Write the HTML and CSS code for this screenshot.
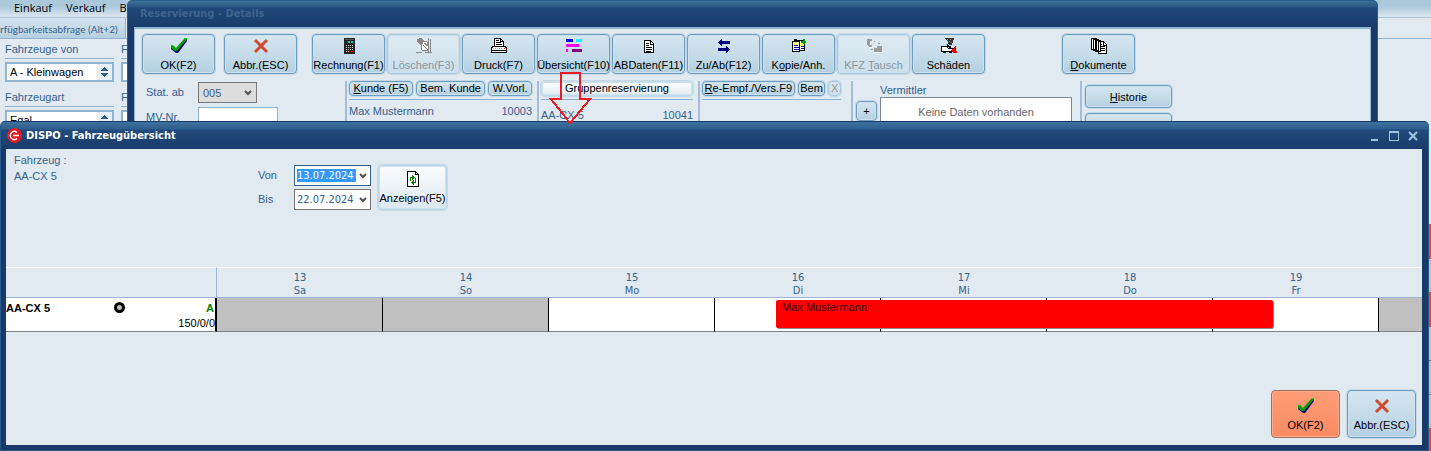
FILE: index.html
```html
<!DOCTYPE html>
<html lang="de">
<head>
  <meta charset="UTF-8">
  <meta name="viewport" content="width=device-width, initial-scale=1.0">
  <title>DISPO - Fahrzeugübersicht</title>
  <link rel="stylesheet" href="styles.css">
</head>
<body>
  <div class="desktop">

    <!-- main window in the background -->
    <div class="main-window">
      <nav class="menu-bar">
        <a href="#">Einkauf</a>
        <a href="#">Verkauf</a>
        <a href="#">B</a>
      </nav>
      <div class="tab-bar"><span class="tab">rfügbarkeitsabfrage (Alt+2)</span></div>
      <div class="filters">
        <div class="filter">
          <label for="vehicleFrom">Fahrzeuge von</label>
          <div class="spin-box">
            <select id="vehicleFrom"><option>A - Kleinwagen</option></select>
            <svg viewBox="0 0 7 10"><path d="M0 4L3.500 0L7 4zM0 6L3.500 10L7 6z"/></svg>
          </div>
        </div>
        <div class="filter">
          <label for="vehicleTo">F</label>
          <div class="spin-box"><select id="vehicleTo"><option></option></select></div>
        </div>
        <div class="filter">
          <label for="vehicleType">Fahrzeugart</label>
          <div class="spin-box">
            <select id="vehicleType"><option>Egal</option></select>
            <svg viewBox="0 0 7 10"><path d="M0 4L3.500 0L7 4zM0 6L3.500 10L7 6z"/></svg>
          </div>
        </div>
        <div class="filter">
          <label for="vehicleGroup">F</label>
          <div class="spin-box"><select id="vehicleGroup"><option></option></select></div>
        </div>
      </div>
      <div class="edge-strip"></div>
    </div>

    <!-- reservation details -->
    <section class="window details">
      <header class="title-bar">Reservierung - Details</header>
      <div class="details-body">
        <div class="toolbar">
          <button class="tool">
            <svg class="mark" viewBox="0 0 18 16"><path fill="#000080" d="M1 9l2-1 3 3L14 2l3-1v2L8 15H6L1 11z"/><path fill="#00a000" d="M1 8l2-1 3 3L14 1h3L7 13H5L1 10z"/><path fill="#00e000" d="M1 7h2v1H1zM14 0h3v1h-3z"/></svg>
            OK(F2)
          </button>
          <button class="tool cancel">
            <svg class="mark" viewBox="0 0 18 16"><path fill="none" stroke="#d0492f" stroke-width="3" d="M3 2l12 12M15 2L3 14"/></svg>
            Abbr.(ESC)
          </button>
          <button class="tool group">
            <svg viewBox="0 0 16 16"><rect x="3" width="11" height="16" rx="1" fill="#222"/><path fill="#555" d="M4 1h9v1H4z"/><path fill="#00c8c8" d="M7 3h2v2H7zM10 3h2v2h-2z"/><path fill="#ccc" d="M5 7h1v1H5zM7 7h1v1H7zM9 7h1v1H9zM11 7h1v1h-1zM5 9h1v1H5zM7 9h1v1H7zM9 9h1v1H9zM11 9h1v1h-1zM5 11h1v1H5zM7 11h1v1H7zM9 11h1v1H9zM11 11h1v1h-1zM5 13h1v1H5zM7 13h1v1H7z"/><path fill="red" d="M9 13h3v1H9z"/></svg>
            Rechnung(F1)
          </button>
          <button class="tool" disabled>
            <svg viewBox="0 0 16 16"><path fill="#888" d="M1 1l4-1 3 2-1 3-3 2-3-3z"/><path fill="#fff" stroke="#888" d="M5 7l3-4 3 1 2 5-2 4-5-1z"/><path fill="none" stroke="#888" d="M12.500 0v14M14.500 1v14M0 14.500h6M9 14.500h7M7 7l4 4M8 5l4 3"/></svg>
            Löschen(F3)
          </button>
          <button class="tool">
            <svg viewBox="0 0 16 16"><path fill="#fff" stroke="#000" d="M3.500 8.500v-8h6l3 3v5z"/><path fill="none" stroke="#000" d="M5 2.500h3M5 4.500h5M5 6.500h6M9.500 1v2.500h3"/><path fill="#fff" stroke="#000" d="M.5 9.500l2-1h11l2 1v5H.5z"/><path stroke="#999" stroke-dasharray="1 1" d="M2 10.500h10"/><path stroke="#000" d="M1 12.500h14"/><path fill="red" d="M13 10h1v1h-1z"/></svg>
            Druck(F7)
          </button>
          <button class="tool">
            <svg viewBox="0 0 16 16"><path fill="#0000ff" d="M0 1h7v3H0z"/><path fill="#00ffff" d="M10 1h6v3h-6z"/><path fill="#ff00ff" d="M0 6h13v3H0zM0 11h2v3H0z"/><path fill="#800080" d="M6 11h10v3H6z"/></svg>
            Übersicht(F10)
          </button>
          <button class="tool">
            <svg viewBox="0 0 16 16"><path fill="#fff" stroke="#000" d="M3.500 2.500h6l3 3v9h-9z"/><path fill="none" stroke="#000" d="M9.500 2v4h3M5 5.500h3M5 7.500h3M5 9.500h6M5 11.500h6M5 13.500h5"/></svg>
            ABDaten(F11)
          </button>
          <button class="tool">
            <svg viewBox="0 0 16 16"><path fill="#000080" d="M2 4.500L6 1v2h8v3H6v2zM14 11.500L10 8v2H2v3h8v2z"/></svg>
            Zu/Ab(F12)
          </button>
          <button class="tool">
            <svg viewBox="0 0 16 16"><path fill="#fff" stroke="#000" d="M1.500 3.500h7v10h-7zM8.500 2.500h5v10h-5z"/><path fill="#ffff60" d="M2 4h5v3H2zM9 5h4v3H9z"/><path stroke="#000" d="M3 2.500h7M3 1.500h3"/><path stroke="#0000a0" d="M3 7.500h4M3 9.500h5M3 11.500h5M10 8.500h3M10 10.500h3"/><path stroke="#00a000" stroke-width="2" d="M10 4h5M13 1v5"/></svg>
            <span>K<u>o</u>pie/Anh.</span>
          </button>
          <button class="tool" disabled>
            <svg viewBox="0 0 16 16"><path fill="#9a9a9a" d="M1 1h5v2H4v4h2v2H3L1 7zM8 10h3V8h5v6h-8z"/><path fill="#fff" d="M3 9h4v1H3zM8 14h8v1H8zM11 3h1v1h-1z"/><path fill="#9a9a9a" d="M8 3h1v1H8zM12 5h2v1h-2zM5 11h2v1H5z"/></svg>
            <span>KFZ <u>T</u>ausch</span>
          </button>
          <button class="tool">
            <svg viewBox="0 0 16 16"><path fill="#333" d="M4 0h9l-1 4-1 3H8L7 4z"/><path fill="#999" d="M6 1h1v1H6zM9 1h1v1H9zM8 3h1v1H8zM10 4h1v1h-1z"/><path fill="#fff" stroke="#000" d="M.5 8.500h5l2 2h4v3H.5z"/><path stroke="#000" stroke-width="2" d="M2 14h3M8 14h3M6 7l4 3"/><path fill="red" d="M11 11l4-3v3l1 4h-3l-3-2z"/><path fill="#000" d="M14 10h1v2h-1z"/></svg>
            Schäden
          </button>
          <button class="tool documents">
            <svg viewBox="0 0 16 16"><path fill="#fff" stroke="#000" d="M.5 .5h5v11h-5zM2.500 1.500h5v11h-5zM4.500 2.500h5v11h-5zM7.500 3.500h5l3 3v9h-8z"/><path fill="none" stroke="#000" d="M12.500 3v4h3M9 6.500h2M9 8.500h5M9 10.500h5M9 12.500h5"/></svg>
            <span><u>D</u>okumente</span>
          </button>
        </div>

        <div class="info-row">
          <div class="info status">
            <label for="status">Stat. ab</label>
            <div class="status-select">
              <select id="status" disabled><option>005</option></select>
              <svg class="chevron" viewBox="0 0 8 6"><path d="M1 1l3 3 3-3"/></svg>
            </div>
            <label for="mvNr">MV-Nr.</label>
            <input type="text" id="mvNr">
          </div>
          <div class="info customer">
            <div class="pills">
              <button class="pill"><u>K</u>unde (F5)</button>
              <button class="pill">Bem. Kunde</button>
              <button class="pill">W.Vorl.</button>
            </div>
            <div class="info-line"><span>Max Mustermann</span><span>10003</span></div>
          </div>
          <div class="info vehicle">
            <div class="pills"><button class="pill light">Gruppenreservierung</button></div>
            <div class="info-line"><span>AA-CX 5</span><span>10041</span></div>
          </div>
          <div class="info invoice">
            <div class="pills">
              <button class="pill"><u>R</u>e-Empf./Vers.F9</button>
              <button class="pill">Bem</button>
              <button class="pill" disabled>X</button>
            </div>
            <div class="info-line"></div>
          </div>
          <div class="info agent">
            <button class="plus" aria-label="Vermittler hinzufügen">+</button>
            <div class="agent-list">
              <span>Vermittler</span>
              <div class="list-box">Keine Daten vorhanden</div>
            </div>
          </div>
          <div class="info side-buttons">
            <button class="side"><u>H</u>istorie</button>
            <button class="side">Stammdaten</button>
          </div>
        </div>
      </div>
    </section>

    <!-- vehicle overview -->
    <section class="window dispo">
      <header class="title-bar">
        <svg class="app-icon" viewBox="0 0 15 15"><circle cx="7.500" cy="7.500" r="7.500" fill="#e31b23"/><path fill="none" stroke="#fff" stroke-width="1.300" d="M10 4.500A4 4 0 1 0 10 10.500M6 7.500h6"/></svg>
        <h1>DISPO - Fahrzeugübersicht</h1>
        <div class="window-buttons">
          <button aria-label="Minimieren"><svg viewBox="0 0 12 12"><path d="M2 10h7"/></svg></button>
          <button aria-label="Maximieren"><svg viewBox="0 0 12 12"><path class="thin" d="M1.500 2v8.500h9V2M1 2.500h10M1 1.500h10"/></svg></button>
          <button aria-label="Schließen"><svg viewBox="0 0 12 12"><path d="M2 2l8 8M10 2l-8 8"/></svg></button>
        </div>
      </header>
      <div class="dispo-body">
        <div class="search">
          <div class="search-vehicle">Fahrzeug :<br>AA-CX 5</div>
          <div class="dates">
            <label for="from">Von</label>
            <div class="date-box active">
              <input type="text" id="from" value="13.07.2024">
              <svg class="chevron" viewBox="0 0 8 6"><path d="M1 1l3 3 3-3"/></svg>
            </div>
            <label for="to">Bis</label>
            <div class="date-box">
              <input type="text" id="to" value="22.07.2024">
              <svg class="chevron" viewBox="0 0 8 6"><path d="M1 1l3 3 3-3"/></svg>
            </div>
          </div>
          <button class="tool show">
            <svg viewBox="0 0 16 16"><path fill="#fff" stroke="#000" d="M2.500 .5h8l3 3v12h-11z"/><path fill="none" stroke="#000" d="M10.500 0v3.500h3"/><path fill="none" stroke="#008000" d="M5.500 10V6.500H8M10.500 7v4.500H8"/><path fill="#008000" d="M7 4l3 2.500L7 9zM9 9v5l-3-2.500z"/></svg>
            Anzeigen(F5)
          </button>
        </div>

        <table class="timeline">
          <colgroup>
            <col class="col-vehicle">
            <col class="col-day" span="7">
            <col>
          </colgroup>
          <thead>
            <tr>
              <th></th>
              <th>13<br>Sa</th>
              <th>14<br>So</th>
              <th>15<br>Mo</th>
              <th>16<br>Di</th>
              <th>17<br>Mi</th>
              <th>18<br>Do</th>
              <th>19<br>Fr</th>
              <th></th>
            </tr>
          </thead>
          <tbody>
            <tr>
              <td class="vehicle-cell">
                <div class="vehicle-head"><b>AA-CX 5</b><i class="ring"></i><b class="class-a">A</b></div>
                <div class="vehicle-km">150/0/0</div>
              </td>
              <td class="weekend"></td>
              <td class="weekend"></td>
              <td></td>
              <td><div class="booking">Max Mustermann</div></td>
              <td></td>
              <td></td>
              <td></td>
              <td class="weekend"></td>
            </tr>
          </tbody>
        </table>

        <div class="footer">
          <button class="tool primary">
            <svg class="mark" viewBox="0 0 18 16"><path fill="#000080" d="M1 9l2-1 3 3L14 2l3-1v2L8 15H6L1 11z"/><path fill="#00a000" d="M1 8l2-1 3 3L14 1h3L7 13H5L1 10z"/><path fill="#00e000" d="M1 7h2v1H1zM14 0h3v1h-3z"/></svg>
            OK(F2)
          </button>
          <button class="tool">
            <svg class="mark" viewBox="0 0 18 16"><path fill="none" stroke="#d0492f" stroke-width="3" d="M3 2l12 12M15 2L3 14"/></svg>
            Abbr.(ESC)
          </button>
        </div>
      </div>
    </section>

    <!-- pointer from the Übersicht button to the overview window -->
    <svg class="arrow" viewBox="0 0 44 54"><path d="M12 2h19v26h10L21 52 2 28h10z"/></svg>
  </div>
</body>
</html>
```
FILE: styles.css
```css
* {
  box-sizing: border-box;
}
body {
  margin: 0;
  background: #e1e9f1;
  color: #36618c;
  font-family: "Liberation Sans", Arial, sans-serif;
  font-size: 11px;
  line-height: 14px;
}
button, input, select {
  font: inherit;
  color: #000;
  margin: 0;
}
select {
  appearance: none;
}
svg {
  shape-rendering: crispEdges;
}
.desktop {
  position: relative;
  min-height: 100vh;
  overflow: hidden;
}

/* main window */
.menu-bar {
  display: flex;
  gap: 14px;
  height: 18px;
  padding: 0 14px;
  background: linear-gradient(#a9c8da, #adc9dc 40%, #dde7ef);
  border-bottom: 1px solid #a9c3d8;
  font-family: "Open Sans", sans-serif;
  font-size: 11px;
  line-height: 16px;
}
.menu-bar a {
  color: #000;
  text-decoration: none;
}
.tab-bar {
  height: 21px;
  border-bottom: 1px solid #8fb4d2;
}
.tab {
  display: block;
  width: 126px;
  height: 20px;
  font-family: Lato, sans-serif;
  font-size: 10px;
  line-height: 22px;
  white-space: nowrap;
  background: linear-gradient(#d5e4ee, #b5d0e0);
  border-right: 1px solid #8fb4d2;
}
.filters {
  display: grid;
  grid-template-columns: 109px 109px;
  gap: 8px 7px;
  padding: 3px 5px;
}
.filter label {
  display: block;
  height: 17px;
  line-height: 15px;
  border-bottom: 1px solid #8fb4d2;
  margin-bottom: 3px;
}
.spin-box {
  position: relative;
}
.spin-box select {
  width: 100%;
  height: 20px;
  padding: 0 3px;
  border: 2px solid #8fb4d2;
  border-radius: 0;
  background: linear-gradient(#e6eff6, #e6eff6) right / 15px 100% no-repeat #fff;
}
.spin-box svg {
  position: absolute;
  right: 6px;
  top: 5px;
  width: 7px;
  height: 10px;
  fill: #36618c;
}
.edge-strip {
  position: absolute;
  top: 0;
  right: 0;
  bottom: 0;
  width: 2px;
  background: linear-gradient(transparent 224px, #ff3b3b 224px 259px, #c0c0c0 259px 292px, #ff3b3b 292px 327px, #c0c0c0 327px 360px, #777 360px 361px, #c0c0c0 361px 394px, #777 394px 395px, #c0c0c0 395px 428px, #ff3b3b 428px);
}

/* windows */
.window {
  position: absolute;
  display: flex;
  flex-direction: column;
  background: #193a69;
  border: 1px solid #285a8c;
  border-radius: 5px 5px 0 0;
}
.details {
  top: 0;
  left: 127px;
  right: 53px;
  bottom: 0;
  padding: 0 6px;
  background: linear-gradient(#3d7099, #2a5685 6px, #1f487a 7px, #193a69 27px);
}
.dispo {
  top: 121px;
  left: 0;
  right: 2px;
  bottom: 0;
  padding: 0 6px 5px 5px;
  background: linear-gradient(#3f729e, #2c5e8f 7px, #214b7c 8px, #193a69 28px);
  border-top-color: #193a69;
}
.title-bar {
  display: flex;
  align-items: center;
  height: 27px;
  flex: none;
  color: #3e648e;
  font-family: "DejaVu Sans Condensed", "DejaVu Sans", sans-serif;
  font-size: 11px;
  font-weight: bold;
}
.details .title-bar {
  height: 26px;
  padding-left: 6px;
}
.title-bar h1 {
  margin: 0 auto 0 4px;
  color: #fff;
  font-size: 11px;
}
.app-icon {
  width: 15px;
  height: 15px;
  margin-left: 1px;
  shape-rendering: auto;
}
.window-buttons {
  display: flex;
  gap: 7px;
  padding-right: 3px;
}
.window-buttons button {
  width: 12px;
  height: 12px;
  padding: 0;
  border: 0;
  background: none;
}
.window-buttons svg {
  display: block;
  fill: none;
  stroke: #9fc6e0;
  stroke-width: 2;
}
.window-buttons .thin {
  stroke-width: 1;
}
.window-buttons button:last-child svg {
  shape-rendering: auto;
}
.details-body {
  flex: 1;
  padding: 5px 7px;
  background: #e1e9f1;
  border: 1px solid #8fb4d2;
  border-top-width: 2px;
}

/* buttons */
.tool, .pill, .plus, .side {
  border: 1px solid #6c9dc0;
  border-radius: 4px;
  background: linear-gradient(#d5e6f0, #c6dce9 50%, #b3d0e1);
  box-shadow: inset 0 0 0 1px #cde2ee, 0 0 0 1px #c4d8e6;
  white-space: nowrap;
}
.tool {
  display: flex;
  flex-direction: column;
  align-items: center;
  width: 73px;
  height: 40px;
  padding: 3px 0 0;
  flex: none;
}
.tool svg {
  width: 16px;
  height: 16px;
  margin-bottom: 4px;
}
.tool .mark {
  width: 18px;
  shape-rendering: auto;
}
.tool:disabled, .pill:disabled {
  color: #8a949c;
  border-color: #a9c9dd;
  background: linear-gradient(#dfebf3, #cbdfea);
}
.toolbar {
  display: flex;
  gap: 2px;
}
.cancel {
  margin-left: 7px;
}
.group {
  margin-left: 13px;
}
.documents {
  margin-left: 75px;
}

/* details */
.info-row {
  display: flex;
  height: 300px;
  margin-top: 7px;
}
.info {
  flex: none;
  padding: 0 5px 0 2px;
  border-left: 2px solid #a4bcd6;
}
.status {
  display: grid;
  grid-template-columns: 52px 80px;
  grid-auto-rows: 21px;
  row-gap: 4px;
  align-content: start;
  width: 203px;
  padding-top: 1px;
  padding-left: 4px;
  border-left: 0;
  line-height: 20px;
}
.status-select {
  position: relative;
}
.status-select select {
  width: 59px;
  height: 21px;
  padding: 0 4px;
  border: 1px solid #777;
  border-radius: 0;
  background: #dcdcdc;
  color: #36618c;
  opacity: 1;
}
.chevron {
  width: 8px;
  height: 6px;
  fill: none;
  stroke: #505050;
  stroke-width: 2;
  shape-rendering: auto;
}
.status-select .chevron {
  position: absolute;
  left: 46px;
  top: 8px;
}
.status input {
  width: 80px;
  height: 21px;
  border: 1px solid #8fb4d2;
}
.customer {
  width: 192px;
}
.vehicle {
  width: 161px;
}
.invoice {
  width: 153px;
  padding-right: 10px;
}
.agent {
  display: flex;
  gap: 3px;
  width: 229px;
  padding-left: 3px;
  padding-right: 8px;
}
.pills {
  display: flex;
  gap: 3px;
  padding-bottom: 3px;
  border-bottom: 1px solid #8fb4d2;
}
.pill {
  height: 15px;
  padding: 0 5px;
  line-height: 13px;
}
.customer .pill, .invoice .pill {
  flex: auto;
  padding: 0 1px;
}
.light {
  flex: 1;
  border-color: #c3dbe9;
  background: linear-gradient(#fff, #e2edf4);
}
.info-line {
  display: flex;
  justify-content: space-between;
  padding-top: 4px;
}
.vehicle .info-line {
  padding-top: 8px;
}
.plus {
  width: 21px;
  height: 20px;
  margin-top: 20px;
  padding: 0;
}
.agent-list {
  flex: 1;
  padding-top: 2px;
}
.list-box {
  height: 60px;
  padding: 7px 0;
  background: #fff;
  border: 1px solid #7a8794;
  color: #666;
  text-align: center;
}
.side-buttons {
  display: flex;
  flex-direction: column;
  gap: 5px;
  padding-top: 4px;
  padding-left: 3px;
}
.side {
  width: 87px;
  height: 23px;
}

/* dispo */
.dispo-body {
  display: flex;
  flex-direction: column;
  flex: 1;
  background: #e1e9f1;
}
.search {
  display: flex;
  align-items: flex-start;
  min-height: 118px;
  padding: 16px 8px;
}
.search-vehicle {
  width: 244px;
  margin-top: -13px;
  line-height: 16px;
}
.dates {
  display: grid;
  grid-template-columns: 36px 77px;
  grid-auto-rows: 21px;
  row-gap: 3px;
  line-height: 21px;
}
.date-box {
  display: flex;
  align-items: center;
  gap: 3px;
  height: 21px;
  padding: 0 2px;
  background: #fff;
  border: 1px solid #777;
}
.date-box input {
  width: 59px;
  height: 13px;
  padding: 0;
  border: 0;
  color: #36618c;
  font-family: "DejaVu Sans Condensed", "DejaVu Sans", sans-serif;
  font-size: 11px;
}
.date-box.active {
  border-color: #36618c;
}
.date-box.active input {
  background: #3399ff;
  color: #fff;
  border-right: 1px solid #d87a1c;
}
.show {
  width: 69px;
  height: 45px;
  margin-left: 7px;
  padding-top: 5px;
  border-color: #bcd7e6;
  background: linear-gradient(#fbfdfe, #dbe8f1);
}
.timeline {
  width: 100%;
  table-layout: fixed;
  border-spacing: 0;
}
.col-vehicle {
  width: 211px;
}
.col-day {
  width: 166px;
}
.timeline th {
  height: 31px;
  padding: 3px 0 0;
  border-top: 1px solid #fff;
  border-bottom: 1px solid #9db6d3;
  font-family: "DejaVu Sans Condensed", "DejaVu Sans", sans-serif;
  font-size: 11px;
  font-weight: normal;
  line-height: 13px;
}
.timeline th:first-child {
  border-right: 1px solid #9db6d3;
}
.timeline td {
  position: relative;
  height: 34px;
  padding: 0;
  background: #fff;
  border-right: 1px solid #000;
  border-bottom: 1px solid #808080;
}
.timeline .weekend {
  background: #c0c0c0;
}
.timeline td:last-child {
  border-right: 0;
}
.timeline .vehicle-cell {
  border-right-width: 2px;
  color: #000;
}
.vehicle-head {
  display: grid;
  grid-template-columns: 108px 11px 1fr;
  align-items: center;
  height: 17px;
  padding-right: 1px;
}
.ring {
  width: 11px;
  height: 11px;
  border: 3px solid #000;
  border-radius: 50%;
  background: #c0c0c0;
}
.class-a {
  color: #008000;
  text-align: right;
}
.vehicle-km {
  text-align: right;
}
.booking {
  position: absolute;
  z-index: 1;
  top: 2px;
  left: 37%;
  width: 301%;
  height: 28px;
  padding-left: 6px;
  border-radius: 2px;
  background: #f00;
  box-shadow: 1px 1px 0 #909090;
  color: #300;
}
.footer {
  display: flex;
  justify-content: flex-end;
  gap: 7px;
  margin-top: auto;
  padding: 0 6px 7px;
}
.footer .tool {
  width: 69px;
  height: 48px;
  padding-top: 7px;
}
.footer .primary {
  border-color: #a0705c;
  background: linear-gradient(#ff9d78, #f98b62);
  box-shadow: inset 0 0 0 1px #ffad8c;
}
.arrow {
  position: absolute;
  top: 71px;
  left: 549px;
  width: 44px;
  height: 54px;
  fill: none;
  stroke: #ed1c24;
  stroke-width: 2;
}
```
